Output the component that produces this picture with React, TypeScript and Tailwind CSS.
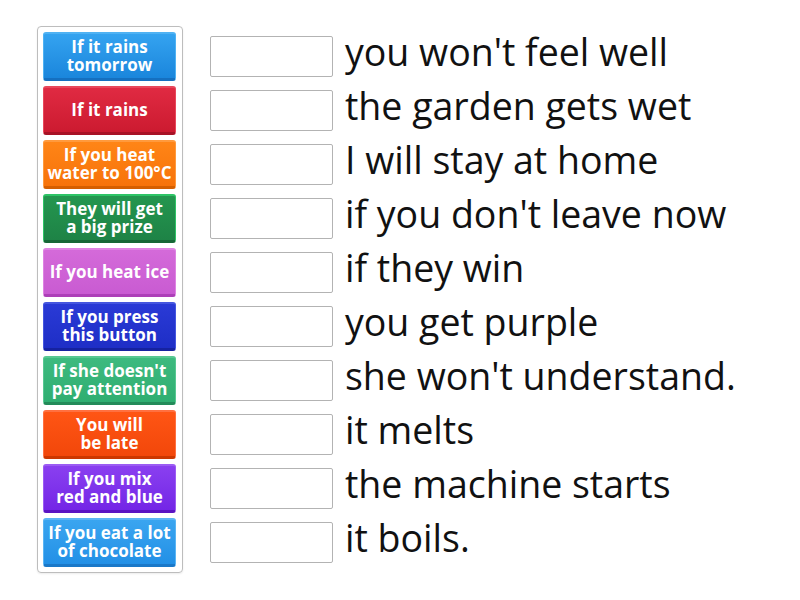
import React from "react";

const buttons: { lines: string[]; cls: string }[] = [
  { lines: ["If it rains", "tomorrow"], cls: "bg-gradient-to-b from-[#34a3f0] to-[#1a86dc] border-[#4fb2f3] border-b-[#1570c0]" },
  { lines: ["If it rains"], cls: "bg-gradient-to-b from-[#e02a42] to-[#cc1a30] border-[#e8475b] border-b-[#a81226]" },
  { lines: ["If you heat", "water to 100°C"], cls: "bg-gradient-to-b from-[#ff8516] to-[#f7730a] border-[#ff9a3d] border-b-[#d55f00]" },
  { lines: ["They will get", "a big prize"], cls: "bg-gradient-to-b from-[#24964f] to-[#1e8346] border-[#2ec466] border-b-[#166636]" },
  { lines: ["If you heat ice"], cls: "bg-gradient-to-b from-[#d46ad9] to-[#c95bd2] border-[#de83e2] border-b-[#ad3fb8]" },
  { lines: ["If you press", "this button"], cls: "bg-gradient-to-b from-[#2a3ad6] to-[#1e2ec6] border-[#4556df] border-b-[#1622a0]" },
  { lines: ["If she doesn't", "pay attention"], cls: "bg-gradient-to-b from-[#3dba7f] to-[#2fae71] border-[#57c892] border-b-[#238b59]" },
  { lines: ["You will", "be late"], cls: "bg-gradient-to-b from-[#ff5514] to-[#f2470a] border-[#ff7040] border-b-[#cc3700]" },
  { lines: ["If you mix", "red and blue"], cls: "bg-gradient-to-b from-[#8a3ff0] to-[#7425e6] border-[#9c5cf3] border-b-[#5a13c2]" },
  { lines: ["If you eat a lot", "of chocolate"], cls: "bg-gradient-to-b from-[#3aa5f0] to-[#2290e6] border-[#5ab5f4] border-b-[#1a78c8]" },
];

const answers = [
  "you won't feel well",
  "the garden gets wet",
  "I will stay at home",
  "if you don't leave now",
  "if they win",
  "you get purple",
  "she won't understand.",
  "it melts",
  "the machine starts",
  "it boils.",
];

export default function App() {
  return (
    <div
      className="w-[800px] h-[600px] bg-white flex items-start pl-[37px] pt-[26px]"
      style={{ fontFamily: '"Open Sans", "Liberation Sans", sans-serif' }}
    >
      <div className="w-[146px] border border-[#bdbdbd] rounded-[4px] pl-[5px] pr-[6px] py-[5px] flex flex-col gap-[5px] shadow-[0_1px_2px_rgba(0,0,0,0.08)]">
        {buttons.map((b, i) => (
          <div
            key={i}
            className={`h-[49px] rounded-[3px] border-t-2 border-x border-b-[3px] flex flex-col items-center justify-center text-white font-bold text-[17px] leading-[18px] ${b.cls}`}
          >
            {b.lines.map((l, j) => (
              <span key={j} className="whitespace-nowrap">{l}</span>
            ))}
          </div>
        ))}
      </div>
      <div className="ml-[27px] mt-[10px] flex flex-col gap-[14px]">
        {answers.map((a, i) => (
          <div key={i} className="flex items-start h-[40px]">
            <div className="w-[123px] h-[41px] border border-[#b3b3b3] rounded-[2px] bg-white shrink-0" />
            <span className="ml-[12px] -mt-[3px] text-[37.5px] leading-[37px] text-[#111] whitespace-nowrap">{a}</span>
          </div>
        ))}
      </div>
    </div>
  );
}
